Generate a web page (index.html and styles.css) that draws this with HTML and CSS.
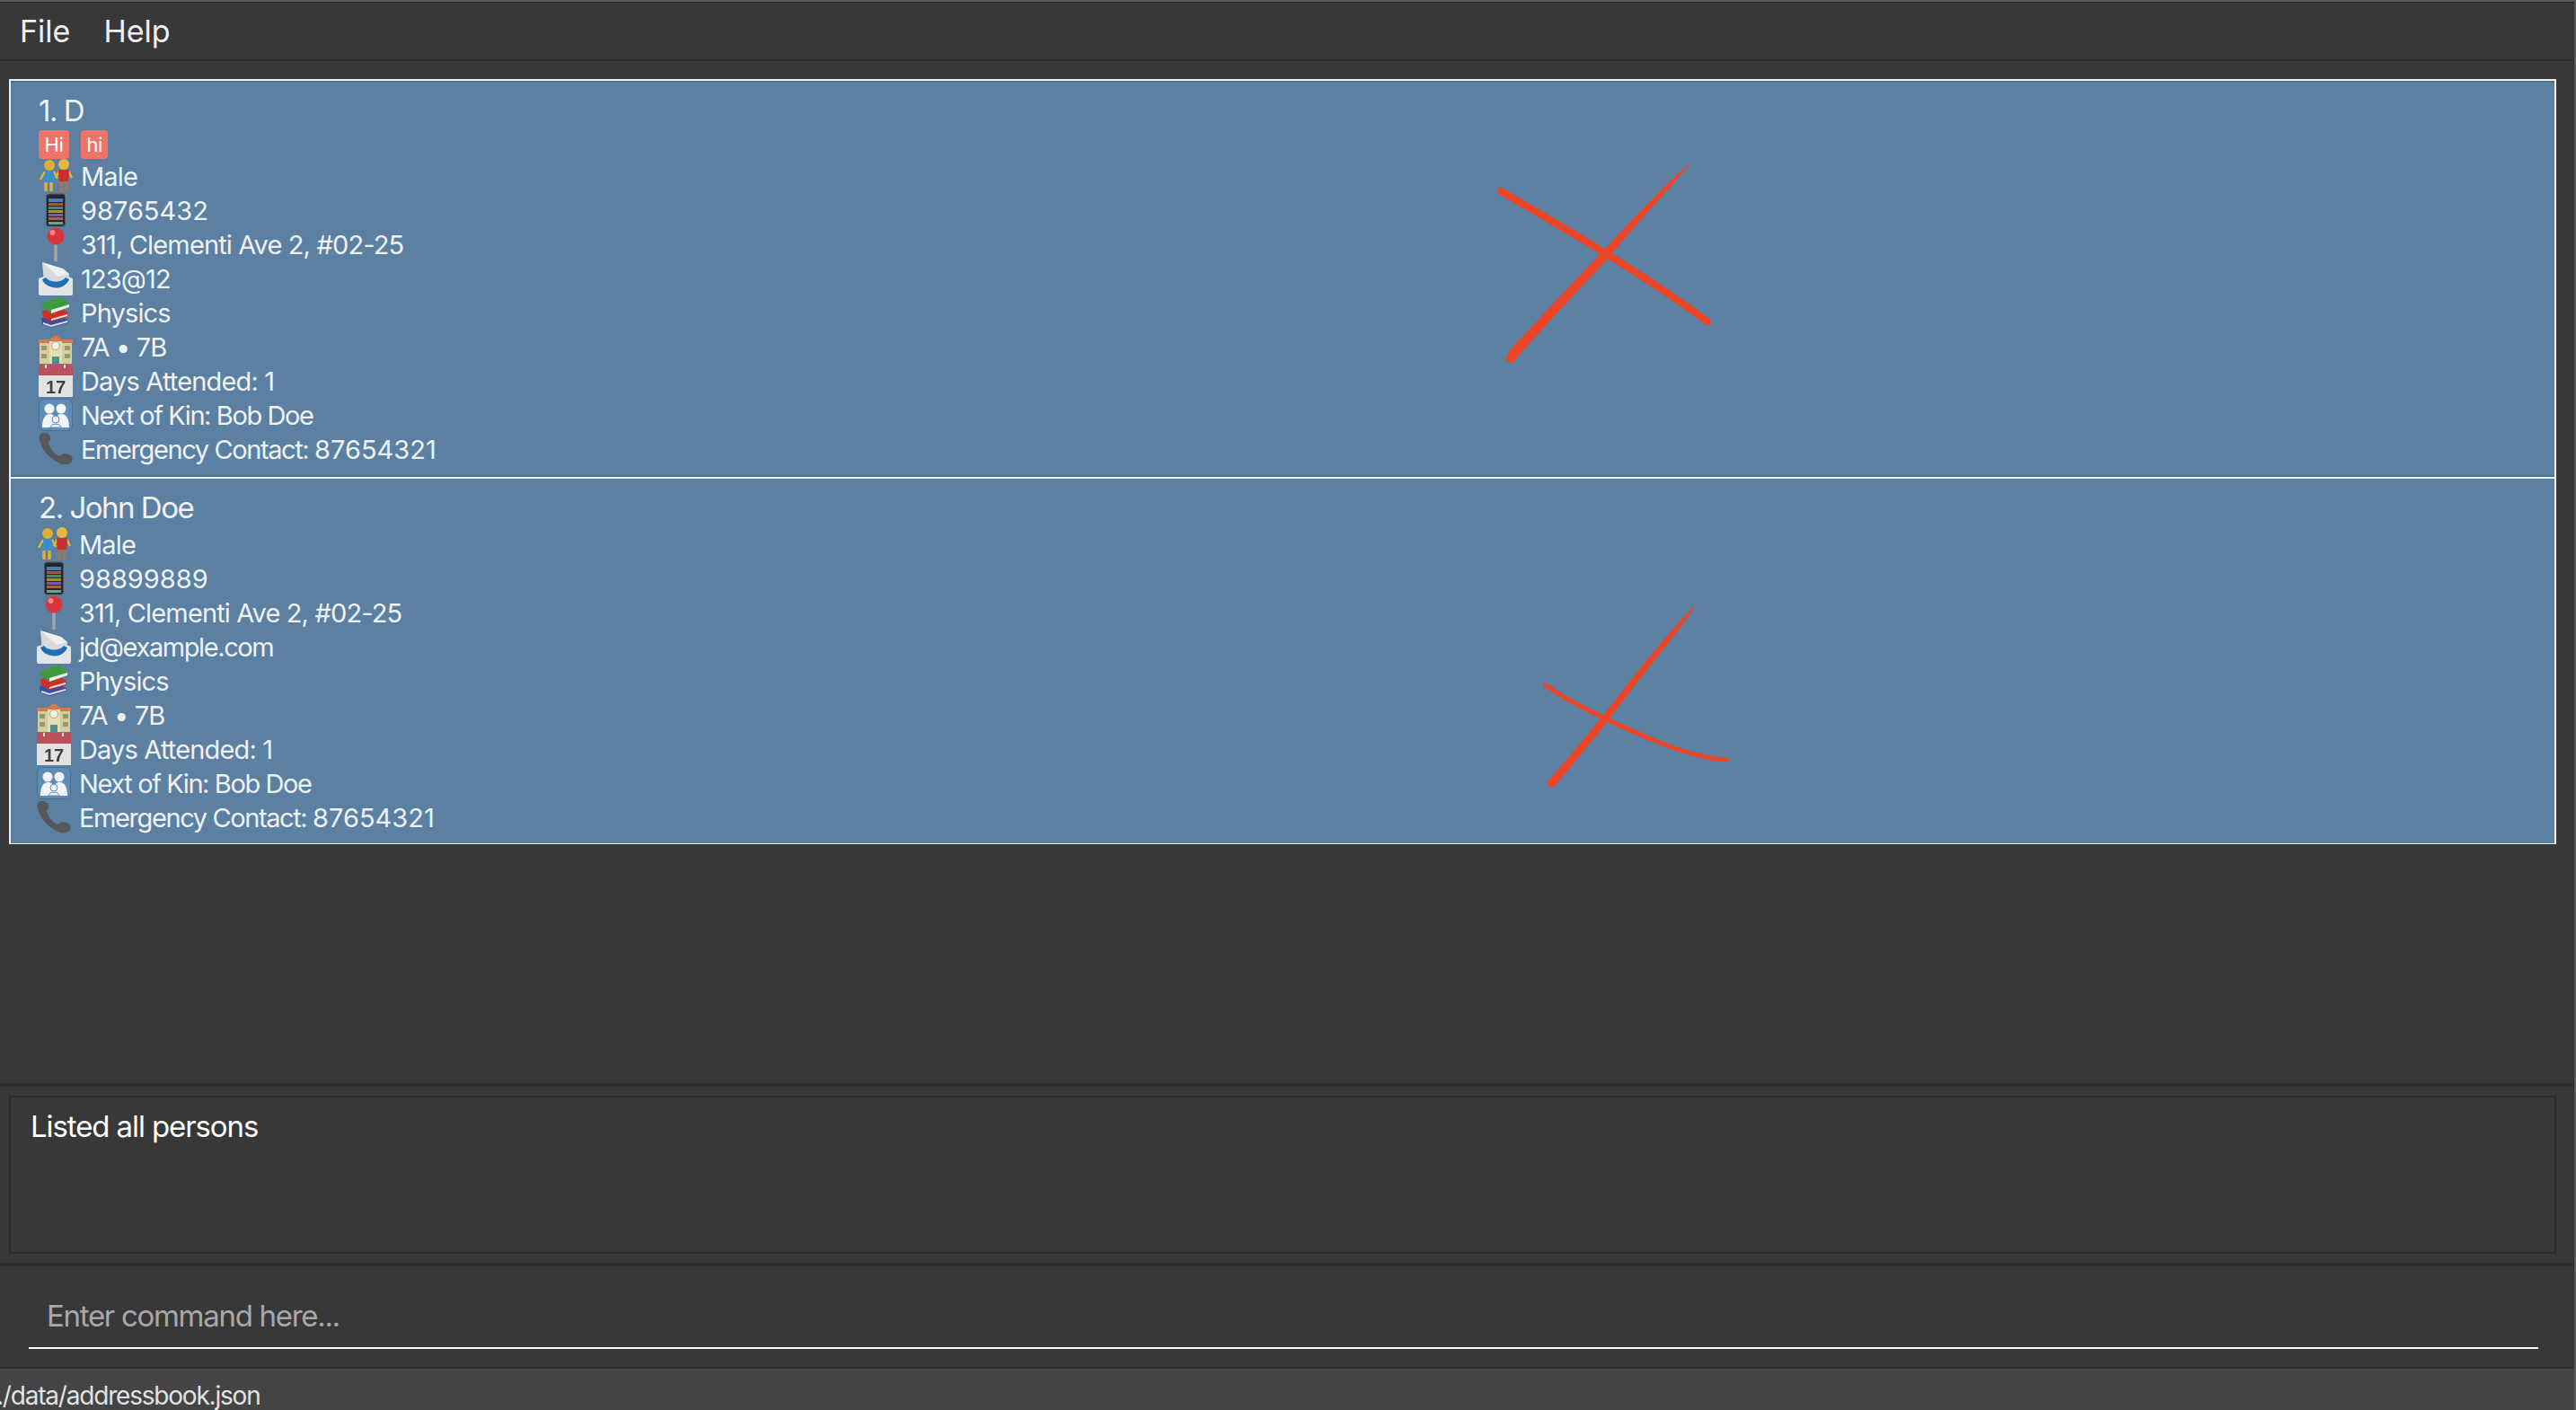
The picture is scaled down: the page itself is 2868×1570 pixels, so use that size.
FILE: index.html
```html
<!DOCTYPE html>
<html lang="en">

<head>
    <meta charset="UTF-8" />
    <title>Address App</title>
    <link rel="stylesheet" href="styles.css">
</head>

<body>
    <svg class="sprites" width="0" height="0">
        <defs>
            <symbol id="i-gender" viewBox="0 0 38 38">
                <path d="M8 25v11M14 25v11" stroke="#dcae3a" stroke-width="3.500" />
                <path d="M7 14L2 23M17 14l4 8" stroke="#e2b23a" stroke-width="2.500" fill="none" />
                <circle cx="12" cy="7" r="6" fill="#dfae35" />
                <path d="M8 13h8l3 13H5z" fill="#3b8fc9" />
                <path d="M25 24v13M31 24v13" stroke="#8f7a6c" stroke-width="4.500" />
                <path d="M23 13l-4 8M33 13l4 8" stroke="#e2b23a" stroke-width="2.500" fill="none" />
                <circle cx="28" cy="6" r="6" fill="#e6b93e" />
                <path d="M22 12h12l-1 13H23z" fill="#c9302c" />
            </symbol>
            <symbol id="i-phone" viewBox="0 0 38 38">
                <rect x="8.500" y="1" width="21" height="36" rx="3" fill="#24282c" stroke="#555a5e" />
                <rect x="11" y="6" width="16" height="4" fill="#4a7fb5" />
                <rect x="11" y="11" width="16" height="3" fill="#a5534a" />
                <rect x="11" y="15" width="16" height="3" fill="#4f8a55" />
                <rect x="11" y="19" width="16" height="3" fill="#a5903a" />
                <rect x="11" y="23" width="16" height="3" fill="#7a5aa5" />
                <rect x="11" y="27" width="16" height="3" fill="#b0603a" />
                <rect x="11" y="32" width="16" height="3" fill="#6aa58a" />
            </symbol>
            <symbol id="i-pin" viewBox="0 0 38 38">
                <path d="M19 18v19" stroke="#a3a5a6" stroke-width="3.500" stroke-linecap="round" />
                <circle cx="19" cy="10" r="9.500" fill="#d7343c" />
                <circle cx="15.500" cy="6" r="3" fill="#ee8a8a" />
            </symbol>
            <symbol id="i-mail" viewBox="0 0 38 38">
                <path d="M4 1L34 14l-1 10H6z" fill="#d5dadf" />
                <path d="M4 1l18 16 12-3-7-6z" fill="#eef0f2" />
                <path d="M0 19l6-2 2 5c4 10 20 10 24 0l1-5 5 2v17a2 2 0 0 1-2 2H2a2 2 0 0 1-2-2z" fill="#e1e5e8" />
                <path d="M4 20c4 12 26 12 30 0l-4-2c-4 6-18 6-22 0z" fill="#1f6fb4" />
            </symbol>
            <symbol id="i-books" viewBox="0 0 38 38">
                <path d="M3 25l19-4 10 6v4l-18 5-10-4z" fill="#3c4f9c" />
                <path d="M5 30l9 3 18-5v2l-18 5-9-3z" fill="#dfe0e6" />
                <path d="M4 17l20-4 9 6-1 5-18 5-9-5z" fill="#cf2f2a" />
                <path d="M14 26l18-5v2l-18 5z" fill="#e8e8e8" />
                <path d="M3 9l21-8 10 8-1 5-19 6-10-7z" fill="#3f9a3f" />
                <path d="M14 16l20-6v3l-20 7z" fill="#e8eee8" />
            </symbol>
            <symbol id="i-school" viewBox="0 0 38 38">
                <rect x="1" y="14" width="36" height="24" fill="#d6cc9c" />
                <path d="M0 11h12l7-5 7 5h12v4H0z" fill="#d9784a" />
                <rect x="12" y="13" width="14" height="25" fill="#e6dcb4" />
                <circle cx="19" cy="18" r="4.500" fill="#f3f1e6" stroke="#b8a873" />
                <rect x="15" y="30" width="8" height="8" fill="#4f8f8a" />
                <path d="M3 18h6v5H3zM3 27h6v5H3zM29 18h6v5h-6zM29 27h6v5h-6z" fill="#8f9c72" />
            </symbol>
            <symbol id="i-calendar" viewBox="0 0 38 38">
                <rect x="0" y="1" width="38" height="36" fill="#e2e2e2" />
                <rect x="0" y="1" width="38" height="12" fill="#b9505c" />
                <rect x="7" y="1" width="2" height="4" fill="#d8dde0" />
                <rect x="28" y="1" width="2" height="4" fill="#d8dde0" />
                <text class="cal-day" x="19" y="33" text-anchor="middle">17</text>
            </symbol>
            <symbol id="i-family" viewBox="0 0 38 38">
                <rect x="0.500" y="1.500" width="37" height="35" rx="6" fill="#5f8cb4" stroke="#476f94" />
                <circle cx="12" cy="12" r="5.500" fill="#f2f5f8" />
                <circle cx="25" cy="12" r="5.500" fill="#f2f5f8" />
                <path d="M4 33c0-11 4-15 8-15 4 0 6 2 7 5 1-3 3-5 7-5 4 0 8 4 8 15z" fill="#f2f5f8" />
                <circle cx="19" cy="24" r="4" fill="#f2f5f8" stroke="#5f8cb4" />
                <path d="M13 33c0-5 12-5 12 0z" fill="#f2f5f8" stroke="#5f8cb4" />
            </symbol>
            <symbol id="i-tel" viewBox="0 0 38 38">
                <path d="M4 1c-3 2-4 5-3 8 3 12 12 22 25 27 4 1 9 0 11-3 2-4-1-7-4-8-3-1-6-1-8 1-1 1-3 1-4 0-5-3-8-8-10-13 0-2 1-3 2-4 1-3-1-9-9-8z" fill="#55585b" />
            </symbol>
        </defs>
    </svg>

    <div class="app">
        <nav class="menu-bar">
            <span class="menu-item">File</span>
            <span class="menu-item">Help</span>
        </nav>

        <main class="list-pane">
            <div class="person-list">
                <article class="person-card first">
                    <h2 class="person-name">1. D</h2>
                    <div class="tags">
                        <span class="tag">Hi</span>
                        <span class="tag">hi</span>
                    </div>
                    <div class="field"><svg class="icon"><use href="#i-gender" /></svg>Male</div>
                    <div class="field"><svg class="icon"><use href="#i-phone" /></svg><span class="digits">98765432</span></div>
                    <div class="field"><svg class="icon"><use href="#i-pin" /></svg>311, Clementi Ave 2, #02-25</div>
                    <div class="field"><svg class="icon"><use href="#i-mail" /></svg>123@12</div>
                    <div class="field"><svg class="icon"><use href="#i-books" /></svg>Physics</div>
                    <div class="field"><svg class="icon"><use href="#i-school" /></svg>7A • 7B</div>
                    <div class="field"><svg class="icon"><use href="#i-calendar" /></svg>Days Attended: 1</div>
                    <div class="field tight"><svg class="icon"><use href="#i-family" /></svg>Next of Kin: Bob Doe</div>
                    <div class="field tight"><svg class="icon"><use href="#i-tel" /></svg>Emergency Contact:&nbsp;<span class="digits">87654321</span></div>
                    <svg class="scribble" width="250" height="235" viewBox="0 0 250 235">
                        <path class="pen" stroke-width="8" d="M11 38C70 72 170 130 241 183" />
                        <path d="M222 6C197 39 160 75 131 112C95 150 52 196 26 227C22 232 15 228 17 222C20 216 26 209 32 203C62 171 100 130 125 104C155 72 197 27 222 6z" />
                    </svg>
                </article>
                <article class="person-card second">
                    <h2 class="person-name">2. John Doe</h2>
                    <div class="field"><svg class="icon"><use href="#i-gender" /></svg>Male</div>
                    <div class="field"><svg class="icon"><use href="#i-phone" /></svg><span class="digits">98899889</span></div>
                    <div class="field"><svg class="icon"><use href="#i-pin" /></svg>311, Clementi Ave 2, #02-25</div>
                    <div class="field tight"><svg class="icon"><use href="#i-mail" /></svg>jd@example.com</div>
                    <div class="field"><svg class="icon"><use href="#i-books" /></svg>Physics</div>
                    <div class="field"><svg class="icon"><use href="#i-school" /></svg>7A • 7B</div>
                    <div class="field"><svg class="icon"><use href="#i-calendar" /></svg>Days Attended: 1</div>
                    <div class="field tight"><svg class="icon"><use href="#i-family" /></svg>Next of Kin: Bob Doe</div>
                    <div class="field tight"><svg class="icon"><use href="#i-tel" /></svg>Emergency Contact:&nbsp;<span class="digits">87654321</span></div>
                    <svg class="scribble" width="220" height="220" viewBox="0 0 220 220">
                        <path class="pen" stroke-width="5" d="M10 98C20 104 28 111 37 115C70 133 100 147 137 162C165 173 190 180 212 181" />
                        <path d="M177 8C165 30 135 65 110 97C80 137 50 175 21 209C16 214 11 212 12 205C30 185 55 155 75 130C110 85 150 35 177 8z" />
                    </svg>
                </article>
            </div>
        </main>

        <section class="result-pane">
            <div class="result-box">Listed all persons</div>
        </section>

        <section class="command-pane">
            <div class="command-box">Enter command here...</div>
        </section>

        <footer class="status-bar">./data/addressbook.json</footer>
    </div>
</body>

</html>
```

FILE: styles.css
```css
body,
html {
    height: 100%;
    margin: 0;
    padding: 0;
    background-color: #383838;
    font-family: Inter, "Noto Sans", sans-serif;
    overflow: hidden;
}

.sprites {
    display: block;
    height: 0;
}

.app {
    display: flex;
    flex-direction: column;
    height: 1570px;
    border-top: 2px solid #5a5a5a;
    border-right: 2px solid #5a5a5a;
    box-sizing: border-box;
}

.menu-bar {
    display: flex;
    gap: 37px;
    height: 66px;
    align-items: center;
    padding: 0 0 1px 22px;
    border-top: 1px solid #1e1e1e;
    border-bottom: 2px solid #2c2c2c;
    box-sizing: border-box;
    color: #f0f0f0;
    font-size: 34px;
}

.list-pane {
    flex: 1;
    padding: 20px 20px 0 10px;
}

.person-card {
    position: relative;
    height: 443px;
    box-sizing: border-box;
    padding: 11px 31px;
    background-color: #5b80a2;
    border: 2px solid #f0f0f0;
    border-bottom: none;
    color: #eef2f6;
    font-size: 29px;
    letter-spacing: -0.85px;
}

.person-card.first {
    box-shadow: inset 0 2px 0 #46798f, inset 0 -2px 0 #46798f;
}

.person-card.second {
    height: 409px;
    border-bottom: 1px solid #f0f0f0;
    padding-top: 10px;
    padding-left: 29px;
}

.person-name {
    margin: 0;
    height: 44px;
    line-height: 44px;
    font-size: 33px;
    font-weight: 400;
    letter-spacing: -1.5px;
}

.second .person-name {
    padding-left: 2px;
}

.tags {
    display: flex;
    gap: 13px;
    height: 32px;
}

.tag {
    padding: 0 6.5px;
    line-height: 32px;
    border-radius: 4px;
    background-color: #f0736a;
    color: #fff;
    font-size: 22px;
    letter-spacing: -0.4px;
}

.field {
    display: flex;
    align-items: center;
    height: 38px;
    white-space: nowrap;
}

.field.tight {
    letter-spacing: -1.4px;
}

.digits {
    letter-spacing: 0;
}

.icon {
    width: 38px;
    height: 38px;
    margin-right: 9px;
    flex: none;
    filter: blur(0.5px);
}

.cal-day {
    font-family: "Liberation Sans", sans-serif;
    font-size: 20px;
    font-weight: 700;
    letter-spacing: 0;
    fill: #3f3f3f;
}

.scribble {
    position: absolute;
    left: 1648px;
    top: 85px;
}

.second .scribble {
    left: 1699px;
    top: 132px;
}

.scribble path {
    fill: #ec4426;
}

.scribble .pen {
    fill: none;
    stroke: #ec4426;
    stroke-linecap: round;
}

.result-pane {
    height: 204px;
    box-sizing: border-box;
    padding: 10px 20px 10px 10px;
    border-top: 4px solid #2c2c2c;
    border-bottom: 4px solid #2c2c2c;
}

.result-box {
    height: 100%;
    box-sizing: border-box;
    padding: 12px 22px;
    border: 2px solid #2c2c2c;
    color: #fff;
    font-size: 33px;
    letter-spacing: -1.1px;
}

.command-pane {
    height: 114px;
    box-sizing: border-box;
    padding: 0 40px 20px 32px;
    display: flex;
    align-items: flex-end;
    border-bottom: 2px solid #2c2c2c;
}

.command-box {
    flex: 1;
    padding: 0 20px 15px;
    border-bottom: 2px solid #fff;
    color: #a8a8a8;
    font-size: 33px;
    letter-spacing: -1.3px;
}

.status-bar {
    height: 46px;
    line-height: 60px;
    background-color: #444;
    color: #e2e2e2;
    font-size: 28px;
    letter-spacing: -1.2px;
    white-space: nowrap;
    overflow: hidden;
    margin-left: -4px;
}
```
